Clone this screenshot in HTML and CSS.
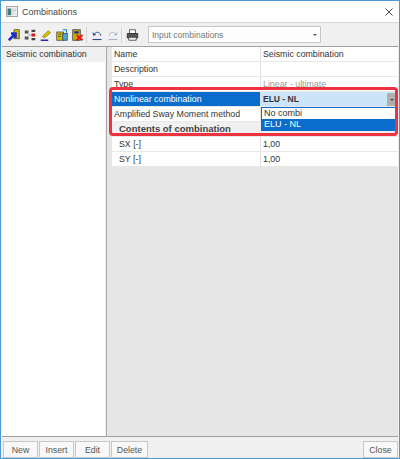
FILE: index.html

```html
<!DOCTYPE html>
<html lang="en">
<head>
    <meta charset="UTF-8">
    <title>Combinations</title>
    <link rel="stylesheet" href="styles.css">
</head>
<body>
    <div class="window">
        <div class="title-bar">
            <svg class="app-icon" width="12" height="11" viewBox="0 0 16 14">
                <rect x="0.5" y="0.5" width="15" height="13" fill="#f4f4f4" stroke="#8a8a8a"/>
                <rect x="2" y="3" width="5" height="9" fill="#3f7f78"/>
                <rect x="8" y="3" width="6" height="4" fill="#cfd8dc"/>
                <rect x="8" y="8" width="6" height="4" fill="#e3e6e8"/>
            </svg>
            <span class="title">Combinations</span>
            <svg class="close-x" width="8" height="8" viewBox="0 0 8 8">
                <path d="M0.5 0.5 L7.5 7.5 M7.5 0.5 L0.5 7.5" stroke="#333" stroke-width="0.9" fill="none"/>
            </svg>
        </div>

        <div class="toolbar">
            <svg class="tool" viewBox="0 0 16 16">
                <rect x="8" y="1" width="7" height="12" fill="#d8b800" stroke="#444"/>
                <path d="M1 15 L8 8 M4 6 H10 V12" stroke="#1a2fd0" stroke-width="3.4" fill="none"/>
            </svg>
            <svg class="tool" viewBox="0 0 16 16">
                <path d="M1 2h5v4H1zM1 10h5v4H1z" fill="#555"/>
                <path d="M10 1h5v3h-5z" fill="#444"/>
                <path d="M10 6h5v4h-5z" fill="#d81818"/>
                <path d="M10 12h5v3h-5z" fill="#444"/>
                <path d="M6 8h4" stroke="#777"/>
            </svg>
            <svg class="tool" viewBox="0 0 16 16">
                <path d="M3 10 L11 2 L14 5 L6 12 Z" fill="#d8c000" stroke="#6a6000" stroke-width="0.7"/>
                <path d="M1 15 H11" stroke="#2a2ab0" stroke-width="2"/>
            </svg>
            <svg class="tool" viewBox="0 0 16 16">
                <rect x="1" y="4" width="9" height="11" fill="#d8c000" stroke="#444"/>
                <rect x="9" y="6" width="6" height="9" fill="#4aa8d8" stroke="#245"/>
                <path d="M9 1 L14 1 L14 5" stroke="#2a7ac0" stroke-width="1.5" fill="none"/>
                <path d="M3 7h4M3 10h4" stroke="#333"/>
            </svg>
            <svg class="tool" viewBox="0 0 16 16">
                <rect x="1" y="1" width="10" height="14" fill="#c8b000" stroke="#333"/>
                <rect x="3" y="3" width="6" height="3" fill="#2a2a90"/>
                <path d="M6 8 L14 15 M14 8 L6 15" stroke="#e81010" stroke-width="2.4"/>
            </svg>
            <span class="tool-sep"></span>
            <svg class="tool" viewBox="0 0 16 16">
                <path d="M4 8 C6 3 12 3 13 9" stroke="#2a4a90" stroke-width="1.3" fill="none"/>
                <path d="M2 4 L3 9 L7 8 Z" fill="#2a4a90"/>
                <path d="M2 14 H14" stroke="#2a4a90" stroke-width="1.5"/>
            </svg>
            <svg class="tool" viewBox="0 0 16 16">
                <path d="M12 8 C10 3 4 3 3 9" stroke="#a8b4c8" stroke-width="1.3" fill="none"/>
                <path d="M14 4 L13 9 L9 8 Z" fill="#a8b4c8"/>
                <path d="M2 14 H14" stroke="#a8b4c8" stroke-width="1.5"/>
            </svg>
            <span class="tool-sep"></span>
            <svg class="tool print" viewBox="0 0 16 16">
                <path d="M4 1h8v5H4z" fill="#fff" stroke="#333"/>
                <path d="M1 6h14v6H1z" fill="#555" stroke="#222"/>
                <path d="M3 11h10v4H3z" fill="#eee" stroke="#333"/>
            </svg>
            <div class="toolbar-combo">
                <span>Input combinations</span>
                <span class="combo-arrow"></span>
            </div>
        </div>

        <div class="main">
            <div class="list-pane">
                <div class="list-item">Seismic combination</div>
            </div>
            <div class="prop-pane">
                <div class="prop-table">
                    <div class="row"><div class="cell-name">Name</div><div class="cell-value">Seismic combination</div></div>
                    <div class="row"><div class="cell-name">Description</div><div class="cell-value"></div></div>
                    <div class="row"><div class="cell-name">Type</div><div class="cell-value muted">Linear - ultimate</div></div>
                    <div class="row"><div class="cell-name selected">Nonlinear combination</div><div class="cell-value editing">ELU - NL<span class="edit-btn"></span></div></div>
                    <div class="row"><div class="cell-name">Amplified Sway Moment method</div><div class="cell-value"></div></div>
                    <div class="row group"><div class="group-title">Contents of combination</div></div>
                    <div class="row"><div class="cell-name indent">SX [-]</div><div class="cell-value">1,00</div></div>
                    <div class="row"><div class="cell-name indent">SY [-]</div><div class="cell-value">1,00</div></div>
                </div>
                <div class="dropdown">
                    <div class="option">No combi</div>
                    <div class="option active">ELU - NL</div>
                </div>
                <div class="highlight"></div>
            </div>
        </div>

        <div class="footer">
            <button>New</button>
            <button>Insert</button>
            <button>Edit</button>
            <button class="delete-btn">Delete</button>
            <button class="close-btn">Close</button>
        </div>
    </div>
</body>
</html>
```

FILE: styles.css

```css
* {
    margin: 0;
    padding: 0;
    box-sizing: border-box;
}

body {
    font-family: "Liberation Sans", Arial, sans-serif;
    font-size: 8.8px;
    color: #333;
    background-color: #FFF;
}

.window {
    width: 400px;
    height: 459px;
    display: flex;
    flex-direction: column;
    border: 1px solid #4A9AD4;
    background-color: #F0F0F0;
}

.title-bar {
    height: 21px;
    display: flex;
    align-items: center;
    padding: 0 6px 0 5px;
    background-color: #FFF;
}

.title {
    margin-left: 4px;
    font-size: 9px;
    flex: 1;
    color: #444;
}

.toolbar {
    height: 24px;
    display: flex;
    align-items: center;
    padding-left: 5px;
    background-color: #F0F0F0;
    border-top: 1px solid #D8D8D8;
}

.tool {
    width: 12px;
    height: 12px;
    margin: 0 2px;
}

.print {
    width: 13px;
}

.tool-sep {
    width: 1px;
    height: 16px;
    margin-right: 2px;
    background-color: #D4D4D4;
}

.toolbar-combo {
    width: 173px;
    height: 17px;
    margin-left: 7px;
    padding: 0 2px 0 3px;
    display: flex;
    align-items: center;
    justify-content: space-between;
    background-color: #FDFDFD;
    border: 1px solid #C8C8C8;
    color: #777;
    font-size: 8.5px;
}

.combo-arrow {
    width: 0;
    height: 0;
    margin-right: 1px;
    border-left: 2px solid transparent;
    border-right: 2px solid transparent;
    border-top: 2px solid #555;
}

.main {
    flex: 1;
    display: flex;
    margin-left: 1px;
    margin-right: 1px;
    border-top: 1px solid #A0A0A0;
    border-bottom: 1px solid #A0A0A0;
    min-height: 0;
}

.list-pane {
    width: 103px;
    background-color: #FFF;
}

.list-item {
    height: 15px;
    line-height: 15px;
    padding-left: 4px;
    background-color: #F0F0F0;
}

.prop-pane {
    flex: 1;
    position: relative;
    margin-left: 1px;
    padding-left: 5px;
    background-color: #E6E6E6;
    border-left: 1px solid #A8A8A8;
}

.prop-table {
    background-color: #FFF;
}

.row {
    height: 15px;
    display: flex;
    line-height: 15px;
    border-bottom: 1px solid #E8E8E8;
}

.cell-name {
    width: 149px;
    padding-left: 2px;
    border-right: 1px solid #E0E0E0;
    white-space: nowrap;
    overflow: hidden;
}

.indent {
    padding-left: 7px;
}

.selected {
    background-color: #0A6CCB;
    color: #FFF;
}

.cell-value {
    flex: 1;
    padding-left: 2px;
    position: relative;
}

.muted {
    color: #999;
}

.editing {
    background-color: #CCE4F7;
    font-weight: bold;
    font-size: 8.5px;
}

.edit-btn {
    position: absolute;
    top: 1px;
    right: 1px;
    width: 10px;
    height: 13px;
    background-color: #AFAFAF;
}

.edit-btn::after {
    content: "";
    position: absolute;
    top: 6px;
    left: 3px;
    border-left: 2px solid transparent;
    border-right: 2px solid transparent;
    border-top: 2px solid #444;
}

.group {
    background-color: #F0F0F0;
}

.group-title {
    padding-left: 7px;
    font-weight: bold;
    font-size: 9.5px;
    line-height: 13px;
    color: #444;
}

.dropdown {
    position: absolute;
    left: 154px;
    top: 60px;
    width: 136px;
    height: 24px;
    background-color: #FFF;
    border: 1px solid #0A6CCB;
    line-height: 11px;
}

.option {
    height: 11px;
    padding-left: 2px;
    font-size: 9px;
}

.active {
    background-color: #0A6CCB;
    color: #FFF;
}

.highlight {
    position: absolute;
    left: 2px;
    top: 40px;
    width: 289px;
    height: 49px;
    border: 3px solid #EE3340;
    border-radius: 4px;
}

.footer {
    height: 21px;
    display: flex;
    align-items: flex-end;
    padding: 0 1px 0 2px;
    gap: 1px;
}

button {
    width: 35px;
    height: 17px;
    font-family: "Liberation Sans", Arial, sans-serif;
    font-size: 8.8px;
    color: #555;
    background-color: #F8F8F8;
    border: 1px solid #C8C8C8;
}

.delete-btn {
    width: 37px;
}

.close-btn {
    margin-left: auto;
}
```
